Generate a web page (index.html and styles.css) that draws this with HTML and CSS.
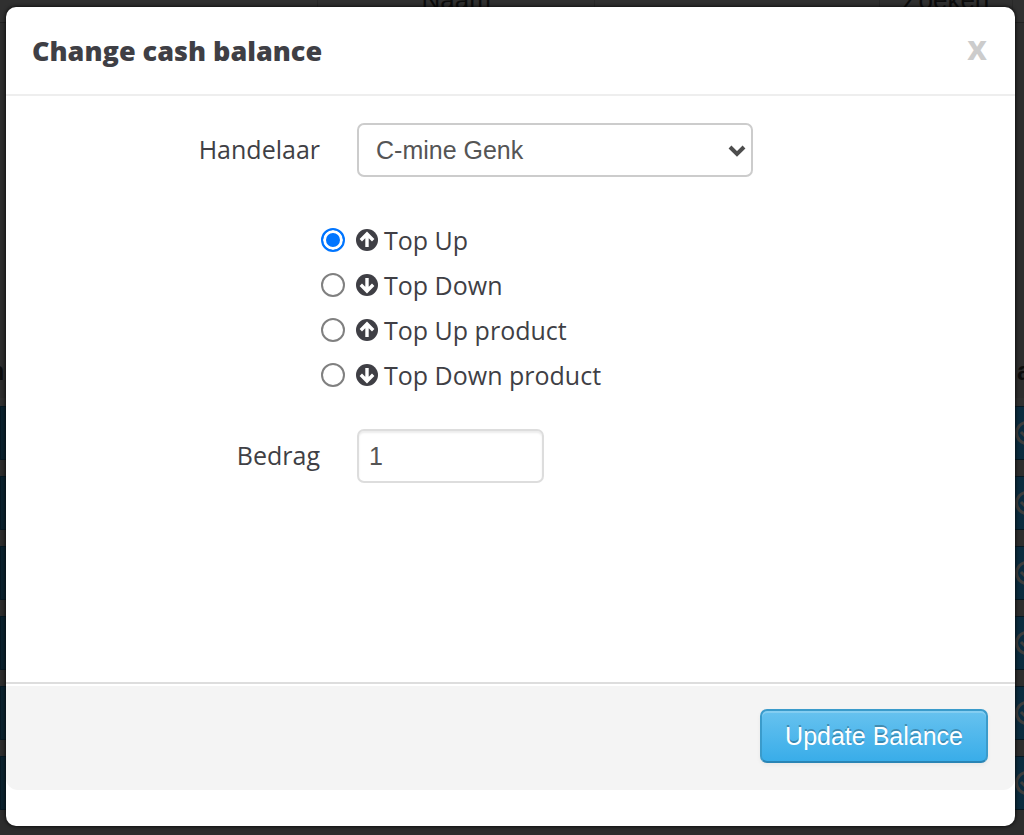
FILE: index.html
```html
<!DOCTYPE html>
<html lang="nl">
<head>
    <meta charset="UTF-8">
    <meta name="viewport" content="width=device-width, initial-scale=1.0">
    <title>Change cash balance</title>
    <link rel="stylesheet" href="styles.css">
</head>
<body>
    <svg class="sprite" aria-hidden="true">
        <symbol id="arrow-up" viewBox="0 0 22 22">
            <circle cx="11" cy="11" r="11" fill="currentColor"/>
            <path d="M4.8 11.2 11 5l6.2 6.2M11 6.5V18" fill="none" stroke="#fff" stroke-width="3.4"/>
        </symbol>
        <symbol id="arrow-down" viewBox="0 0 22 22">
            <circle cx="11" cy="11" r="11" fill="currentColor"/>
            <path d="M4.8 10.8 11 17l6.2-6.2M11 15.5V4" fill="none" stroke="#fff" stroke-width="3.4"/>
        </symbol>
        <symbol id="check" viewBox="0 0 24 24">
            <circle cx="12" cy="12" r="10.5" fill="none" stroke="currentColor" stroke-width="3"/>
            <path d="m6 11 4 4 8-8" fill="none" stroke="currentColor" stroke-width="3"/>
        </symbol>
    </svg>

    <!-- dimmed page behind the dialog -->
    <div class="page" aria-hidden="true">
        <div class="filters">
            <span></span>
            <span>Naam</span>
            <span></span>
            <span>Zoeken</span>
            <span></span>
        </div>
        <div class="list-head"><span>n</span><span>a</span></div>
        <div class="list">
            <div class="list-row"><svg><use href="#check"/></svg></div>
            <div class="list-row"><svg><use href="#check"/></svg></div>
            <div class="list-row"><svg><use href="#check"/></svg></div>
            <div class="list-row"><svg><use href="#check"/></svg></div>
            <div class="list-row"><svg><use href="#check"/></svg></div>
            <div class="list-row"><svg><use href="#check"/></svg></div>
        </div>
    </div>

    <form class="modal" role="dialog" aria-labelledby="modal-title">
        <div class="modal-header">
            <h3 id="modal-title">Change cash balance</h3>
            <button type="button" class="close">x</button>
        </div>

        <div class="modal-body">
            <div class="field">
                <label for="merchant">Handelaar</label>
                <div class="select">
                    <select id="merchant">
                        <option>C-mine Genk</option>
                    </select>
                    <svg class="chevron" viewBox="0 0 18 12" aria-hidden="true">
                        <path d="m2 2 7 7 7-7" fill="none" stroke="#4d4d4d" stroke-width="4"/>
                    </svg>
                </div>
            </div>

            <div class="options">
                <label><input type="radio" name="type" checked><svg><use href="#arrow-up"/></svg>Top Up</label>
                <label><input type="radio" name="type"><svg><use href="#arrow-down"/></svg>Top Down</label>
                <label><input type="radio" name="type"><svg><use href="#arrow-up"/></svg>Top Up product</label>
                <label><input type="radio" name="type"><svg><use href="#arrow-down"/></svg>Top Down product</label>
            </div>

            <div class="field">
                <label for="amount">Bedrag</label>
                <input type="text" id="amount" class="amount" value="1">
            </div>
        </div>

        <div class="modal-footer">
            <button type="submit" class="btn">Update Balance</button>
        </div>
    </form>
</body>
</html>
```
FILE: styles.css
```css
* {
    box-sizing: border-box;
}

body {
    margin: 0;
    font-family: "Open Sans", sans-serif;
    font-size: 25px;
    color: #3f3f45;
    background-color: #2d2d2d;
}

.sprite {
    position: absolute;
    width: 0;
    height: 0;
}

/* page behind */
.page {
    height: 100vh;
    overflow: hidden;
    font-family: "Liberation Sans", sans-serif;
    color: #0c0c0c;
}

.filters {
    display: grid;
    grid-template-columns: 31% 27% 1fr 13% 12px;
    height: 23px;
    border-bottom: 1px solid #222;
    background-color: #303030;
    font-size: 26px;
    text-align: center;
    line-height: 0;
}

.filters span + span {
    border-left: 1px solid #292929;
}

.list-head {
    display: flex;
    justify-content: space-between;
    height: 383px;
    padding-top: 332px;
    margin: 0 -7px 0 -11px;
    font-weight: bold;
    line-height: 32px;
    border-bottom: 8px solid #303030;
}

.list-row {
    display: flex;
    align-items: center;
    justify-content: flex-end;
    height: 54px;
    margin: 0 -16px 16px 0;
    border: 1px solid #061823;
    background-image: linear-gradient(to right, #0b222e, #0b2c3f);
    color: #3d3d3d;
}

.list-row svg {
    width: 24px;
    height: 24px;
}

/* dialog */
.modal {
    position: absolute;
    top: 7px;
    left: 6px;
    right: 9px;
    padding-bottom: 36px;
    border-radius: 10px;
    background-color: #fff;
    box-shadow: 0 0 4px #000;
}

.modal-header {
    display: flex;
    align-items: center;
    justify-content: space-between;
    height: 89px;
    padding: 0 28px 0 26px;
    border-bottom: 2px solid #eee;
}

.modal-header h3 {
    margin: 0;
    font-size: 27px;
    font-weight: 800;
}

.close {
    padding: 0 0 8px;
    border: none;
    background: none;
    font-family: inherit;
    font-size: 34px;
    font-weight: bold;
    line-height: 40px;
    color: #ccc;
    cursor: pointer;
}

.modal-body {
    min-height: 586px;
    padding: 27px 28px;
}

.field {
    display: flex;
    align-items: center;
    gap: 37px;
}

.field label {
    width: 286px;
    padding-bottom: 2px;
    text-align: right;
}

.select {
    position: relative;
    width: 396px;
}

select,
.amount {
    height: 54px;
    border: 2px solid #ccc;
    border-radius: 7px;
    background-color: #fff;
    font-family: "Liberation Sans", sans-serif;
    font-size: 25px;
    color: #555;
}

select {
    appearance: none;
    display: block;
    width: 100%;
    padding: 0 40px 0 17px;
}

.chevron {
    position: absolute;
    top: 22px;
    right: 7px;
    width: 18px;
    height: 12px;
    pointer-events: none;
}

.amount {
    width: 187px;
    padding: 0 10px;
    border-color: #ddd;
    box-shadow: inset 0 2px 2px rgba(0, 0, 0, 0.08);
}

.options {
    margin: 41px 0 31px 287px;
}

.options label {
    display: flex;
    align-items: center;
    height: 45px;
    padding-bottom: 2px;
}

.options input {
    appearance: none;
    width: 24px;
    height: 24px;
    margin: 0 11px 0 0;
    border: 2px solid #808080;
    border-radius: 50%;
    background-color: #fff;
}

.options input:checked {
    border-color: #0075ff;
    background-color: #0075ff;
    box-shadow: inset 0 0 0 3px #fff;
}

.options svg {
    width: 22px;
    height: 22px;
    margin-right: 6px;
}

.modal-footer {
    display: flex;
    justify-content: flex-end;
    padding: 25px 27px 27px;
    border-top: 2px solid #ddd;
    border-radius: 0 0 12px 12px;
    background-color: #f4f4f4;
    box-shadow: inset 0 2px 0 #fff;
}

.btn {
    height: 54px;
    padding: 0 23px;
    border: 2px solid #3a9bcb;
    border-bottom-color: #2a85b5;
    border-radius: 7px;
    background-image: linear-gradient(#67c2ef, #39ade9);
    box-shadow: inset 0 2px 0 rgba(255, 255, 255, 0.2), 0 2px 4px rgba(0, 0, 0, 0.05);
    font-family: "Liberation Sans", sans-serif;
    font-size: 25px;
    color: #fff;
    text-shadow: 0 -2px 0 rgba(0, 0, 0, 0.25);
    cursor: pointer;
}
```
